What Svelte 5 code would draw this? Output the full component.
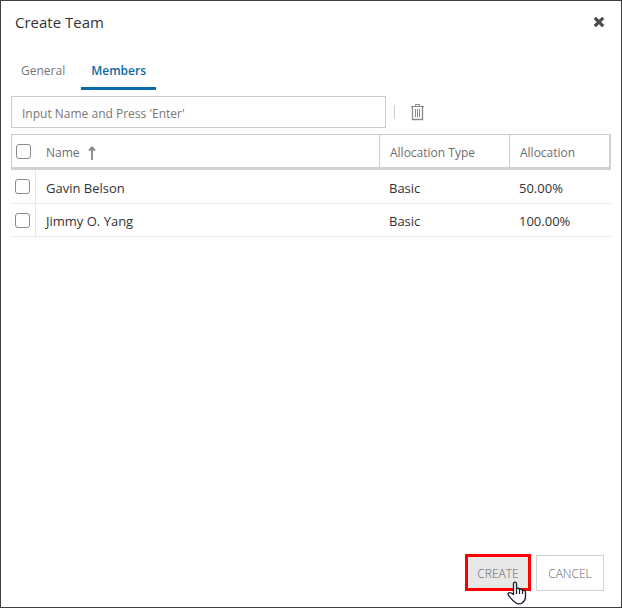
<script>
  let members = $state([
    { name: 'Gavin Belson', type: 'Basic', allocation: '50.00%', selected: false },
    { name: 'Jimmy O. Yang', type: 'Basic', allocation: '100.00%', selected: false }
  ]);
  let query = $state('');
  let allSelected = $derived(members.every((m) => m.selected));

  function toggleAll(event) {
    for (const m of members) m.selected = event.currentTarget.checked;
  }
</script>

<div class="dialog" role="dialog" aria-labelledby="dialog-title">
  <header>
    <h1 id="dialog-title">Create Team</h1>
    <button class="icon-button" type="button" aria-label="Close">
      <svg width="12" height="12" viewBox="0 0 12 12">
        <path d="M2.9 2.9 9.1 9.1M9.1 2.9 2.9 9.1" stroke="#4c4c4c" stroke-width="3.2" stroke-linecap="square" />
      </svg>
    </button>
  </header>

  <div class="tabs" role="tablist">
    <button type="button" role="tab" aria-selected="false">General</button>
    <button type="button" role="tab" aria-selected="true" class="active">Members</button>
  </div>

  <div class="toolbar">
    <input type="text" aria-label="Member name" placeholder="Input Name and Press 'Enter'" bind:value={query} />
    <span class="separator"></span>
    <button class="icon-button" type="button" aria-label="Delete">
      <svg width="13" height="18" viewBox="0 0 13 18" fill="none" stroke="#8a8a8a">
        <path d="M4.5 3V1.5h4V3M0 3.5h13" />
        <path d="M1.5 4v12.5h10V4" stroke-width="1.3" />
        <path d="M4.5 6v8M6.5 6v8M8.5 6v8" />
      </svg>
    </button>
  </div>

  <table>
    <colgroup>
      <col class="col-check" />
      <col />
      <col class="col-type" />
      <col class="col-allocation" />
    </colgroup>
    <thead>
      <tr>
        <th class="check"><input type="checkbox" aria-label="Select all" checked={allSelected} onchange={toggleAll} /></th>
        <th>
          <span class="sorted">Name
            <svg width="8" height="14" viewBox="0 0 8 14" fill="none" stroke="#858585" stroke-width="1.8">
              <path d="M4 14V1.5M1 4.6 4 1.4 7 4.6" />
            </svg>
          </span>
        </th>
        <th class="divided">Allocation Type</th>
        <th class="divided">Allocation</th>
      </tr>
    </thead>
    <tbody>
      {#each members as member}
        <tr>
          <td class="check"><input type="checkbox" aria-label={`Select ${member.name}`} bind:checked={member.selected} /></td>
          <td>{member.name}</td>
          <td>{member.type}</td>
          <td>{member.allocation}</td>
        </tr>
      {/each}
    </tbody>
  </table>

  <footer>
    <button class="action create" type="button">
      CREATE
      <svg class="pointer" width="20" height="24" viewBox="0 0 20 24">
        <path
          d="M6.5 13.5V2.8C6.5 .6 9.5 .6 9.5 2.8V8C10 6.8 12.3 7 12.5 8.6C13.3 7.6 15.2 8 15.5 9.6C16.6 8.9 18.5 9.5 18.5 11.5V16C18.5 19 17 20.6 15 22C13.5 23 10.5 23 9 22C6.5 20.5 3.5 17 1.5 14.4C.3 12.6 2.5 10.8 4.2 12Z"
          fill="#fff" stroke="#16192c" stroke-width="1.3" stroke-linejoin="round" />
        <path d="M9.5 7.5V13M12.5 8.5V13M15.5 9.5V13" stroke="#16192c" stroke-width="1.2" />
      </svg>
    </button>
    <button class="action" type="button">CANCEL</button>
  </footer>
</div>

<style>
  .dialog {
    box-sizing: border-box;
    min-height: 100vh;
    display: flex;
    flex-direction: column;
    padding: 0 10px 16px;
    border: 1px solid #414042;
    background: #fff;
    color: #333;
    font-family: 'Open Sans', 'Noto Sans', sans-serif;
    font-size: 13px;
    line-height: 20px;
  }
  button, input {
    font: inherit;
    color: inherit;
    box-sizing: border-box;
    margin: 0;
  }
  button {
    padding: 0;
    border: 0;
    background: none;
  }
  header {
    display: flex;
    align-items: center;
    justify-content: space-between;
    height: 42px;
    padding: 0 6px 0 4px;
  }
  h1 {
    margin: 0;
    font-size: 15px;
    font-weight: 400;
  }
  .icon-button {
    display: flex;
  }
  .tabs {
    display: flex;
    height: 47px;
  }
  .tabs button {
    padding: 11px 10px 0;
    border-bottom: 3px solid transparent;
    color: #777;
    font-size: 12px;
  }
  .tabs .active {
    margin-left: 6px;
    border-color: #0a6ba8;
    color: #0a6ba8;
    font-weight: 600;
  }
  .toolbar {
    display: flex;
    align-items: center;
    margin: 6px 0;
  }
  .toolbar input {
    width: 375px;
    height: 32px;
    padding: 2px 10px 0;
    border: 1px solid #ccc;
    outline: 0;
    font-size: 12px;
  }
  .toolbar input::placeholder {
    color: #777;
    opacity: 1;
  }
  .separator {
    width: 1px;
    height: 14px;
    margin: 0 16px 0 8px;
    background: #ccc;
  }
  table {
    width: 100%;
    table-layout: fixed;
    border-collapse: separate;
    border-spacing: 0;
  }
  .col-check { width: 25px; }
  .col-type { width: 130px; }
  .col-allocation { width: 102px; }
  th, td {
    box-sizing: border-box;
    padding: 2px 10px 0;
    text-align: left;
    font-weight: 400;
  }
  th {
    height: 36px;
    padding-top: 4px;
    border-top: 1px solid #ccc;
    border-bottom: 3px solid #d0d0d0;
    color: #6e6e6e;
    font-size: 12px;
  }
  th.divided { border-left: 1px solid #ccc; }
  th:first-child { border-left: 1px solid #ccc; }
  th:last-child { border-right: 2px solid #d0d0d0; }
  td {
    height: 33px;
    border-bottom: 1px solid #e6e6e6;
  }
  tbody tr:first-child td { height: 34px; }
  .check, th.check { padding: 0 0 0 4px; }
  td.check { border-right: 1px solid #e6e6e6; }
  .check input {
    display: block;
    appearance: none;
    width: 15px;
    height: 15px;
    border: 1px solid #8a8a8a;
    border-radius: 3px;
    background: #fff;
  }
  .check input:checked { background: #0a6ba8; }
  .sorted {
    display: flex;
    align-items: center;
    gap: 8px;
  }
  footer {
    display: flex;
    align-items: center;
    justify-content: flex-end;
    gap: 5px;
    margin-top: auto;
    padding-right: 7px;
  }
  .action {
    width: 68px;
    height: 36px;
    padding-top: 2px;
    border: 1px solid #d2d2d2;
    color: #666;
    font-size: 12px;
    font-weight: 300;
  }
  .create {
    position: relative;
    width: 66px;
    height: 37px;
    border: 3px solid #f00;
    background: #e8e8e8;
  }
  .pointer {
    position: absolute;
    right: 1px;
    bottom: -17px;
  }
</style>
